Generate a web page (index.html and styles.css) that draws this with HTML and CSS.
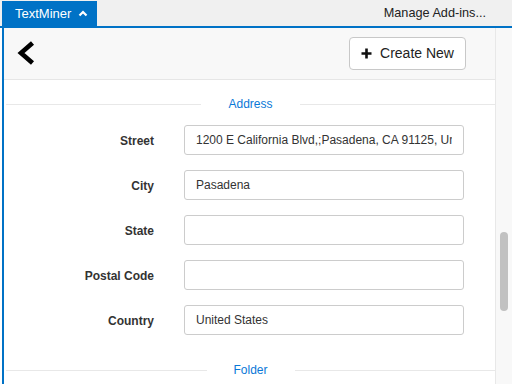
FILE: index.html
```html
<!DOCTYPE html>
<html>
<head>
<meta charset="utf-8">
<link rel="stylesheet" href="styles.css">
</head>
<body>
<div class="topbar">
  <div class="tab">TextMiner
    <svg class="tab-chev" width="10" height="7" viewBox="0 0 10 7"><polyline points="1.5,5.5 5,2 8.5,5.5" fill="none" stroke="#fff" stroke-width="2.2"/></svg>
  </div>
  <div class="manage">Manage Add-ins...</div>
</div>
<div class="pane">
  <div class="content">
    <div class="header">
      <svg class="back" width="20" height="26" viewBox="0 0 20 26"><polyline points="16.5,3 5,13 16.5,23" fill="none" stroke="#000" stroke-width="4.6" stroke-linejoin="miter"/></svg>
      <button class="create"><svg width="11" height="11" viewBox="0 0 11 11"><path d="M5.5 0.5v10M0.5 5.5h10" stroke="#111" stroke-width="2.6"/></svg><span>Create New</span></button>
    </div>
    <div class="section-title first"><span>Address</span></div>
    <div class="form">
      <div class="row"><label>Street</label><input type="text" value="1200 E California Blvd,;Pasadena, CA 91125, United States"></div>
      <div class="row"><label>City</label><input type="text" value="Pasadena"></div>
      <div class="row"><label>State</label><input type="text" value=""></div>
      <div class="row"><label>Postal Code</label><input type="text" value=""></div>
      <div class="row"><label>Country</label><input type="text" value="United States"></div>
    </div>
    <div class="section-title second"><span>Folder</span></div>
  </div>
  <div class="scrollbar"><div class="thumb"></div></div>
</div>
</body>
</html>
```
FILE: styles.css
```css
html, body {
  margin: 0;
  padding: 0;
  background: #fff;
  font-family: "Liberation Sans", Arial, sans-serif;
  overflow: hidden;
  height: 384px;
}
.topbar {
  height: 26px;
  background: #f0f0f0;
  border-bottom: 2px solid #0072c6;
  display: flex;
  justify-content: space-between;
  align-items: flex-end;
}
.tab {
  margin-left: 2px;
  width: 82px;
  height: 25px;
  padding-left: 13px;
  background: #0072c6;
  color: #fff;
  font-size: 13px;
  line-height: 25px;
  display: flex;
  align-items: center;
}
.tab-chev {
  margin-left: 7px;
  margin-top: -1px;
}
.manage {
  font-size: 12.7px;
  color: #222;
  margin-right: 26px;
  line-height: 26px;
  height: 26px;
}
.pane {
  display: flex;
  margin-left: 2px;
  border-left: 2px solid #0072c6;
  height: 356px;
}
.content {
  width: 491px;
  overflow: hidden;
}
.header {
  height: 51px;
  background: #f8f8f8;
  border-bottom: 1px solid #e6e6e6;
  display: flex;
  align-items: center;
  justify-content: space-between;
  padding: 0 29px 0 12px;
}
.back {
  margin-top: -2px;
}
.create {
  width: 117px;
  height: 33px;
  margin-top: -1px;
  background: #fff;
  border: 1px solid #c8c8c8;
  border-radius: 4px;
  display: flex;
  align-items: center;
  justify-content: center;
  gap: 8px;
  padding: 0;
  font-family: "Liberation Sans", Arial, sans-serif;
  font-size: 14px;
  color: #222;
}
.section-title {
  display: flex;
  align-items: center;
  gap: 27px;
  margin-left: 2px;
  font-size: 12px;
  color: #0a78d7;
  line-height: 14px;
}
.section-title::before,
.section-title::after {
  content: "";
  flex: 1;
  height: 1px;
  background: #e8e8e8;
}
.section-title.first {
  margin-top: 17px;
}
.section-title.second {
  margin-top: 28px;
}
.form {
  margin-top: 14px;
  display: flex;
  flex-direction: column;
  gap: 15px;
}
.row {
  display: flex;
  align-items: center;
  height: 30px;
}
.row label {
  width: 150px;
  text-align: right;
  font-weight: bold;
  font-size: 12px;
  color: #333;
  margin-right: 30px;
  padding-top: 1px;
}
.row input {
  width: 280px;
  height: 30px;
  box-sizing: border-box;
  border: 1px solid #ccc;
  border-radius: 3px;
  padding: 0 11px;
  font-family: "Liberation Sans", Arial, sans-serif;
  font-size: 12px;
  color: #333;
  background: #fff;
  outline: none;
}
.scrollbar {
  width: 16px;
  border-left: 1px solid #e8e8e8;
  background: #f8f8f8;
  position: relative;
}
.thumb {
  position: absolute;
  left: 4px;
  top: 204px;
  width: 8px;
  height: 79px;
  border-radius: 4px;
  background: #c1c1c1;
}
```
